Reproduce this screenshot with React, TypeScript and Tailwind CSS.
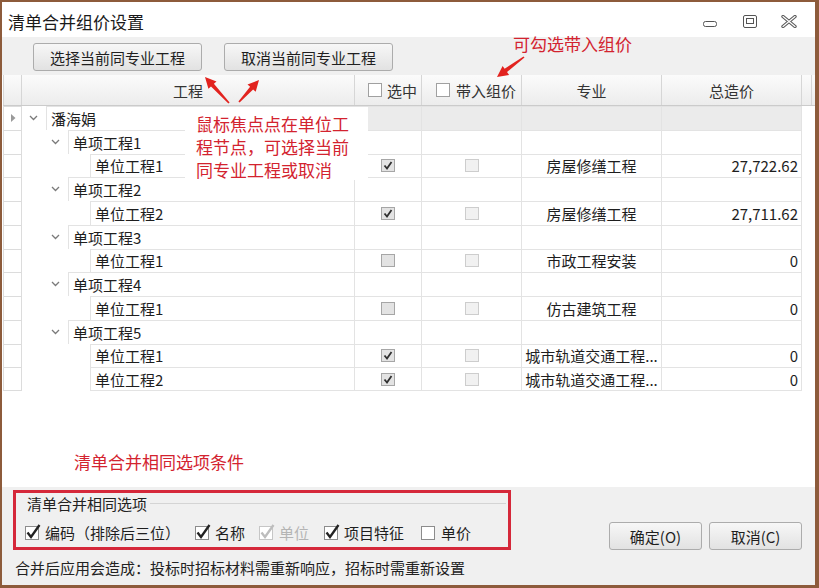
import React from "react";

type Row = { level: number; name: string; check?: boolean; major?: string; total?: string };

const ROWS: Row[] = [
  { level: 0, name: "潘海娟" },
  { level: 1, name: "单项工程1" },
  { level: 2, name: "单位工程1", check: true, major: "房屋修缮工程", total: "27,722.62" },
  { level: 1, name: "单项工程2" },
  { level: 2, name: "单位工程2", check: true, major: "房屋修缮工程", total: "27,711.62" },
  { level: 1, name: "单项工程3" },
  { level: 2, name: "单位工程1", check: false, major: "市政工程安装", total: "0" },
  { level: 1, name: "单项工程4" },
  { level: 2, name: "单位工程1", check: false, major: "仿古建筑工程", total: "0" },
  { level: 1, name: "单项工程5" },
  { level: 2, name: "单位工程1", check: true, major: "城市轨道交通工程...", total: "0" },
  { level: 2, name: "单位工程2", check: true, major: "城市轨道交通工程...", total: "0" },
];

function arrowPoints(x1: number, y1: number, x2: number, y2: number) {
  const dx = x2 - x1, dy = y2 - y1;
  const len = Math.hypot(dx, dy);
  const ux = dx / len, uy = dy / len;
  const nx = -uy, ny = ux;
  const bx = x2 - ux * 11, by = y2 - uy * 11;
  const p = (x: number, y: number) => `${x.toFixed(1)},${y.toFixed(1)}`;
  return [
    p(x1 + nx * 0.8, y1 + ny * 0.8),
    p(bx + nx * 2, by + ny * 2),
    p(bx + nx * 5.5, by + ny * 5.5),
    p(x2, y2),
    p(bx - nx * 5.5, by - ny * 5.5),
    p(bx - nx * 2, by - ny * 2),
    p(x1 - nx * 0.8, y1 - ny * 0.8),
  ].join(" ");
}

function Chevron() {
  return (
    <svg width="9" height="6" viewBox="0 0 9 6">
      <path d="M1 1 L4.5 4.5 L8 1" stroke="#7a7a7a" strokeWidth="1.3" fill="none" />
    </svg>
  );
}

function GridCheck({ checked, faint }: { checked?: boolean; faint?: boolean }) {
  return (
    <span
      className={`w-[14px] h-[13px] border flex items-center justify-center ${
        faint ? "border-[#cdcdcd] bg-[#f1f1f1]" : "border-[#a6a6a6] bg-[#e3e3e3]"
      }`}
    >
      {checked && (
        <svg width="10" height="9" viewBox="0 0 10 9">
          <path d="M1.5 4.5 L4 7.5 L8.5 1" stroke="#303030" strokeWidth="1.8" fill="none" />
        </svg>
      )}
    </span>
  );
}

function OptCheck({ checked, disabled }: { checked?: boolean; disabled?: boolean }) {
  return (
    <svg width="18" height="18" viewBox="0 0 18 18" className="shrink-0">
      <rect x="1.5" y="3.5" width="13" height="13" fill="#fff" stroke={disabled ? "#c6c6c6" : "#8c8c8c"} />
      {checked && (
        <path
          d="M3.5 9.5 L7 14 L15.5 2"
          stroke={disabled ? "#bdbdbd" : "#222"}
          strokeWidth="2.3"
          fill="none"
        />
      )}
    </svg>
  );
}

function Btn({ children, className }: { children: React.ReactNode; className: string }) {
  return (
    <div
      className={`h-[28px] flex items-center justify-center rounded-[3px] border border-[#acacac] bg-gradient-to-b from-[#f7f7f7] to-[#e2e2e2] text-[15px] leading-none text-[#1f1f1f] ${className}`}
    >
      {children}
    </div>
  );
}

export default function App() {
  return (
    <div className="relative w-[819px] h-[588px] bg-[#8d5b3b] pl-[2px] pt-[2px] pr-[4px] pb-[3px] font-['Noto_Sans_CJK_SC',sans-serif]">
      <div className="w-full h-full bg-white flex flex-col">
        {/* title bar */}
        <div className="h-[35px] shrink-0 flex items-center pt-[3px] pl-[6px] pr-[18px]">
          <span className="text-[17px] leading-none text-[#1a1a1a]">清单合并组价设置</span>
          <div className="ml-auto flex items-center">
            <svg width="14" height="8" viewBox="0 0 14 8" className="mt-[6px]">
              <rect x="0.5" y="1.5" width="13" height="5" rx="2" fill="none" stroke="#555" />
            </svg>
            <svg width="14" height="13" viewBox="0 0 14 13" className="ml-[26px]">
              <rect x="0.5" y="0.5" width="13" height="12" rx="1.5" fill="none" stroke="#555" />
              <rect x="3.5" y="3.5" width="7" height="5" fill="none" stroke="#555" />
            </svg>
            <svg width="16" height="13" viewBox="0 0 16 13" className="ml-[24px]">
              <path d="M2 1.5 L14 11.5 M14 1.5 L2 11.5" stroke="#5a5a5a" strokeWidth="3.4" strokeLinecap="round" />
              <path d="M2 1.5 L14 11.5 M14 1.5 L2 11.5" stroke="#fff" strokeWidth="1.2" strokeLinecap="round" />
            </svg>
          </div>
        </div>

        {/* toolbar */}
        <div className="h-[38px] shrink-0 bg-[#f0f0f0] flex items-start pt-[6px] pl-[31px] gap-[22px]">
          <Btn className="w-[169px]">选择当前同专业工程</Btn>
          <Btn className="w-[169px]">取消当前同专业工程</Btn>
        </div>

        {/* grid */}
        <div className="h-[412px] shrink-0 bg-white flex flex-col text-[#1e1e1e]">
          <div className="h-[31px] shrink-0 flex ml-[1px] bg-gradient-to-b from-[#fbfbfb] to-[#ececec] border-b border-[#cbcbcb] text-[15px] leading-none text-[#333]">
            <div className="w-[19px] border-l border-r border-[#d6d6d6]" />
            <div className="w-[333px] border-r border-[#d6d6d6] flex items-center justify-center">工程</div>
            <div className="w-[67px] border-r border-[#d6d6d6] flex items-center pl-[13px] gap-[5px]">
              <span className="w-[14px] h-[14px] border border-[#a0a0a0] bg-white" />
              选中
            </div>
            <div className="w-[100px] border-r border-[#d6d6d6] flex items-center pl-[14px] gap-[6px]">
              <span className="w-[14px] h-[14px] border border-[#a0a0a0] bg-white" />
              带入组价
            </div>
            <div className="w-[140px] border-r border-[#d6d6d6] flex items-center justify-center">专业</div>
            <div className="w-[140px] border-r border-[#d6d6d6] flex items-center justify-center">总造价</div>
            <div className="w-[10px] border-r border-[#d6d6d6]" />
          </div>

          {ROWS.map((r, i) => {
            const first = i === 0;
            const last = i === ROWS.length - 1;
            const cellB = last ? "border-b" : "";
            const data = first ? "bg-[#ebebeb]" : "";
            return (
              <div key={i} className="h-[23.75px] shrink-0 flex ml-[1px] text-[15px] leading-none">
                <div className={`w-[19px] border-l border-r border-t border-[#dcdcdc] flex items-center pl-[7px] ${cellB}`}>
                  {first && (
                    <svg width="5" height="8" viewBox="0 0 5 8">
                      <path d="M0 0 L4.5 4 L0 8 Z" fill="#9a9a9a" />
                    </svg>
                  )}
                </div>
                <div className="w-[333px] flex">
                  <div
                    className={`shrink-0 flex items-center justify-end ${
                      r.level === 0 ? "w-[24px]" : r.level === 1 ? "w-[46px]" : "w-[68px]"
                    }`}
                  >
                    {r.level < 2 && (
                      <span className="w-[16px] mr-[5px] flex justify-center">
                        <Chevron />
                      </span>
                    )}
                  </div>
                  <div className={`flex-1 border-l border-t border-r border-[#e3e3e3] flex items-center pl-[4px] ${cellB}`}>
                    {r.name}
                  </div>
                </div>
                <div className={`w-[67px] border-t border-r border-[#e3e3e3] flex items-center justify-center ${data} ${cellB}`}>
                  {r.level === 2 && <GridCheck checked={r.check} />}
                </div>
                <div className={`w-[100px] border-t border-r border-[#e3e3e3] flex items-center justify-center ${data} ${cellB}`}>
                  {r.level === 2 && <GridCheck faint />}
                </div>
                <div className={`w-[140px] border-t border-r border-[#e3e3e3] flex items-center justify-center whitespace-nowrap ${data} ${cellB}`}>
                  {r.major}
                </div>
                <div className={`w-[140px] border-t border-r border-[#e3e3e3] flex items-center justify-end pr-[3px] ${data} ${cellB}`}>
                  {r.total}
                </div>
              </div>
            );
          })}

          <div className="flex-1 pl-[72px] pt-[59px]">
            <span className="text-[17px] leading-[24px] text-[#d3232f]">清单合并相同选项条件</span>
          </div>
        </div>

        {/* bottom */}
        <div className="flex-1 bg-[#f0f0f0] flex flex-col pt-[3px] pl-[11px] pr-[13px]">
          <div className="flex items-end">
            <div className="w-[498px] h-[60px] border-[3px] border-[#d5283a] flex flex-col">
              <div className="h-[18px] mt-[1px] flex items-center pl-[11px]">
                <span className="text-[15px] leading-none text-[#222]">清单合并相同选项</span>
                <div className="flex-1 h-px bg-[#d4d4d4] ml-[3px] mr-[2px]" />
              </div>
              <div className="h-[20px] mt-[10px] flex items-center pl-[8px] text-[15px] leading-none text-[#1e1e1e]">
                <div className="w-[170px] flex items-center gap-[3px]">
                  <OptCheck checked />
                  <span>编码（排除后三位）</span>
                </div>
                <div className="w-[64px] flex items-center gap-[3px]">
                  <OptCheck checked />
                  <span>名称</span>
                </div>
                <div className="w-[65px] flex items-center gap-[3px] text-[#b4b4b4]">
                  <OptCheck checked disabled />
                  <span>单位</span>
                </div>
                <div className="w-[97px] flex items-center gap-[3px]">
                  <OptCheck checked />
                  <span>项目特征</span>
                </div>
                <div className="flex items-center gap-[3px]">
                  <OptCheck />
                  <span>单价</span>
                </div>
              </div>
            </div>
            <div className="ml-auto flex gap-[7px]">
              <Btn className="w-[93px]">确定(O)</Btn>
              <Btn className="w-[93px]">取消(C)</Btn>
            </div>
          </div>
          <div className="mt-[7px] h-[20px] flex items-center pl-[2px] text-[15px] leading-none text-[#222]">
            合并后应用会造成：投标时招标材料需重新响应，招标时需重新设置
          </div>
        </div>
      </div>

      {/* callouts */}
      <div className="absolute left-[185px] top-[107px] w-[183px] h-[73px] bg-white pl-[11px] pt-[5px] text-[17px] leading-[23px] text-[#d3232f]">
        <div>鼠标焦点点在单位工</div>
        <div>程节点，可选择当前</div>
        <div>同专业工程或取消</div>
      </div>
      <div className="absolute left-[513px] top-[32px] text-[17px] leading-[24px] text-[#d3232f]">可勾选带入组价</div>
      <svg className="absolute left-0 top-0 pointer-events-none" width="819" height="588" viewBox="0 0 819 588">
        <polygon points={arrowPoints(229, 103, 205, 77)} fill="#e2231f" />
        <polygon points={arrowPoints(239, 102, 259, 80)} fill="#e2231f" />
        <polygon points={arrowPoints(524, 57, 497, 77)} fill="#e2231f" />
      </svg>
    </div>
  );
}
